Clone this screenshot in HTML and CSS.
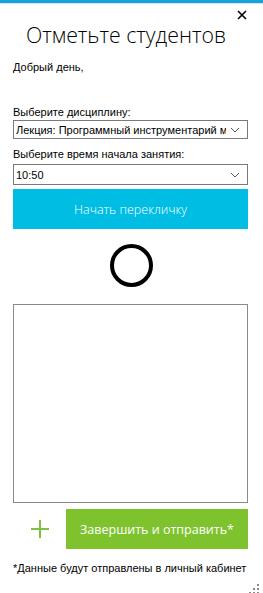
FILE: index.html
```html
<!DOCTYPE html>
<html lang="ru">
<head>
<meta charset="utf-8">
<link rel="stylesheet" href="styles.css">
</head>
<body>
<div class="window">
  <div class="topbar"></div>
  <div class="titlebar">
    <span class="close">
      <svg width="10" height="10" viewBox="0 0 10 10"><path d="M1 1 L9 9 M9 1 L1 9" stroke="#000" stroke-width="1.6" fill="none"/></svg>
    </span>
  </div>
  <h1 class="title">Отметьте студентов</h1>
  <div class="greeting">Добрый день,</div>
  <div class="label label-first">Выберите дисциплину:</div>
  <div class="select">
    <span class="select-text">Лекция: Программный инструментарий м</span>
    <svg class="chev" width="10" height="6" viewBox="0 0 10 6"><path d="M1 1 L5 5 L9 1" stroke="#555" stroke-width="1" fill="none"/></svg>
  </div>
  <div class="label label-second">Выберите время начала занятия:</div>
  <div class="select select-tall">
    <span class="select-text">10:50</span>
    <svg class="chev" width="10" height="6" viewBox="0 0 10 6"><path d="M1 1 L5 5 L9 1" stroke="#555" stroke-width="1" fill="none"/></svg>
  </div>
  <div class="start-btn">Начать перекличку</div>
  <div class="ring-wrap"><div class="ring"></div></div>
  <div class="listbox"></div>
  <div class="actions">
    <div class="plus">
      <svg width="20" height="20" viewBox="0 0 20 20"><path d="M1 10 H19 M10 1 V19" stroke="#7dc242" stroke-width="2" fill="none"/></svg>
    </div>
    <div class="finish-btn">Завершить и отправить*</div>
  </div>
  <div class="note">*Данные будут отправлены в личный кабинет</div>
  <div class="grip">
    <svg width="10" height="10" viewBox="0 0 10 10" fill="#8a8a8a">
      <rect x="8" y="0" width="2" height="2"/>
      <rect x="4" y="4" width="2" height="2"/><rect x="8" y="4" width="2" height="2"/>
      <rect x="0" y="8" width="2" height="2"/><rect x="4" y="8" width="2" height="2"/><rect x="8" y="8" width="2" height="2"/>
    </svg>
  </div>
</div>
</body>
</html>
```
FILE: styles.css
```css
* { box-sizing: border-box; }
html, body { margin: 0; padding: 0; background: #fff; }
body { font-family: "Liberation Sans", Arial, sans-serif; color: #000; }
.window { width: 263px; height: 593px; display: flex; flex-direction: column; padding: 0 15px 0 13px; position: relative; overflow: hidden; }
.topbar { height: 3px; background: #1ba1d6; margin: 0 -15px 0 -13px; box-shadow: 0 1px 0 #c8ecf7; }
.titlebar { height: 17px; display: flex; justify-content: flex-end; align-items: flex-end; }
.close { width: 10px; height: 10px; margin-right: 1px; display: flex; }
.title { margin: 0; font-family: "Open Sans", "Noto Sans", sans-serif; font-weight: 300; font-size: 21.3px; line-height: 30px; text-align: center; padding-right: 9px; }
.greeting { font-size: 11px; line-height: 15px; margin-top: 10px; }
.label { font-size: 11px; line-height: 16px; height: 16px; }
.label-first { margin-top: 29px; }
.label-second { margin-top: 7px; height: 18px; }
.select { height: 19px; border: 1px solid #7a7a7a; display: flex; align-items: center; padding: 0 7px 0 2px; font-size: 11px; }
.select-tall { height: 21px; }
.select-text { flex: 1; white-space: nowrap; overflow: hidden; }
.chev { flex: none; margin-left: 4px; }
.start-btn { margin-top: 4px; height: 40px; background: #00bde4; color: #fff; font-family: "Open Sans", "Noto Sans", sans-serif; font-weight: 300; font-size: 12.5px; display: flex; align-items: center; justify-content: center; }
.ring-wrap { display: flex; justify-content: center; margin-top: 15px; }
.ring { width: 43px; height: 43px; border: 4px solid #000; border-radius: 50%; margin-left: 1px; }
.listbox { margin-top: 17px; height: 199px; border: 1px solid #8a8a8a; }
.actions { margin-top: 6px; height: 40px; display: flex; align-items: center; }
.plus { width: 53px; display: flex; justify-content: center; padding-left: 1px; }
.finish-btn { flex: 1; height: 40px; background: #7ec32d; color: #fff; font-family: "Open Sans", "Noto Sans", sans-serif; font-size: 12.5px; display: flex; align-items: center; justify-content: center; }
.note { margin-top: 12px; font-size: 11px; line-height: 14px; white-space: nowrap; }
.grip { position: absolute; right: 4px; bottom: 3px; width: 10px; height: 10px; }
```
